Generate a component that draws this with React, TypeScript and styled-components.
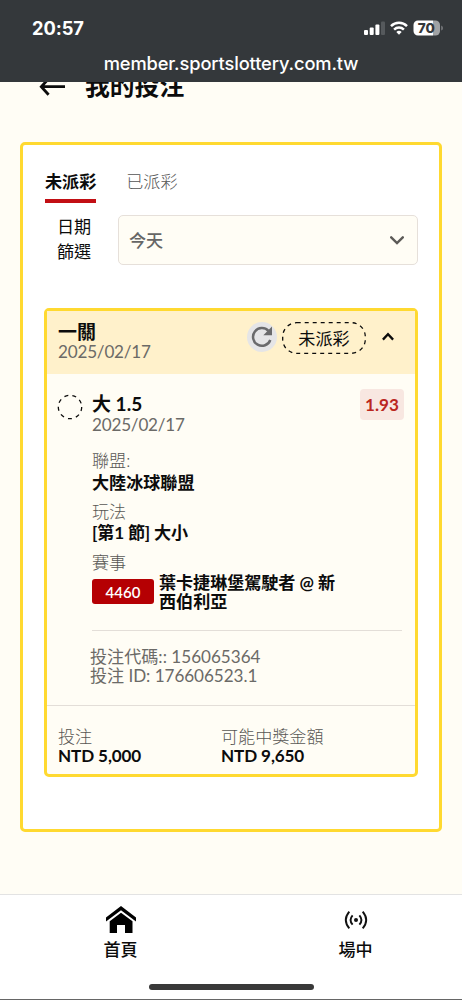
import React from "react";
import styled, { createGlobalStyle } from "styled-components";

const GlobalStyle = createGlobalStyle`
  *, *::before, *::after { box-sizing: border-box; }
  body { margin: 0; background: #fffdf5; }
`;

const Screen = styled.div`
  width: 462px;
  height: 1000px;
  display: flex;
  flex-direction: column;
  overflow: hidden;
  background: #fffdf5;
  color: #0c0c0c;
  font-family: Lato, "Noto Sans CJK TC", sans-serif;
`;

const BrowserBar = styled.header`
  flex: none;
  height: 82px;
  background: #34383b;
  color: #fff;
  font-family: Inter, sans-serif;
`;

const StatusRow = styled.div`
  height: 54px;
  padding: 1px 19px 0 32px;
  display: flex;
  align-items: center;
  justify-content: space-between;
`;

const Clock = styled.span`
  font-size: 18.3px;
  font-weight: 700;
  letter-spacing: -0.1px;
`;

const StatusIcons = styled.div`
  display: flex;
  align-items: center;
  gap: 5px;
  svg { display: block; }
`;

const Address = styled.div`
  height: 18px;
  line-height: 18px;
  text-align: center;
  font-size: 18.3px;
  font-weight: 500;
  letter-spacing: -0.13px;
  white-space: nowrap;
`;

const Main = styled.main`
  flex: 1;
  min-height: 0;
  padding: 0 20px;
  overflow: hidden;
`;

const TitleRow = styled.div`
  height: 30px;
  margin: -10px 0 40px;
  padding-left: 18px;
  display: flex;
  align-items: center;
  gap: 18px;
  svg { display: block; }
`;

const Title = styled.h1`
  margin: -2px 0 0;
  font-size: 24.8px;
  line-height: 30px;
  font-weight: 700;
`;

const Panel = styled.section`
  height: 690px;
  padding: 25px 21px 0 22px;
  border: 3px solid #ffd930;
  border-radius: 5px;
  background: #fff;
`;

const Tabs = styled.nav`
  display: flex;
  gap: 30px;
  height: 33px;
`;

const Tab = styled.div<{ $active?: boolean }>`
  height: 33px;
  line-height: 24px;
  font-size: 17.1px;
  font-weight: ${(p) => (p.$active ? 700 : 300)};
  color: ${(p) => (p.$active ? "#0c0c0c" : "#555")};
  border-bottom: ${(p) => (p.$active ? "4px solid #c20f14" : "none")};
`;

const Filter = styled.div`
  margin-top: 12px;
  padding-left: 12px;
  display: flex;
  justify-content: space-between;
`;

const FilterLabel = styled.div`
  width: 35px;
  margin-top: -1px;
  font-size: 17.1px;
  line-height: 25px;
  font-weight: 400;
`;

const Select = styled.div`
  width: 300px;
  height: 50px;
  padding: 0 13px 2px 10px;
  display: flex;
  align-items: center;
  justify-content: space-between;
  border: 1px solid #e6e0da;
  border-radius: 5px;
  background: #fffdf5;
  color: #666;
  font-size: 17.1px;
  font-weight: 500;
  svg { margin-top: 2px; }
`;

const Ticket = styled.article`
  height: 469px;
  margin: 43px 0 0 -1px;
  display: flex;
  flex-direction: column;
  border: 3px solid #ffd930;
  border-radius: 5px;
  background: #fffdf5;
`;

const TicketHead = styled.div`
  height: 63px;
  padding: 10px 21px 0 11px;
  display: flex;
  background: #fff1cb;
`;

const HeadText = styled.div`
  flex: 1;
`;

const HeadActions = styled.div`
  height: 33px;
  display: flex;
  align-items: center;
`;

const Refresh = styled.div`
  width: 30px;
  height: 30px;
  margin: -2px 5px 0 0;
  display: flex;
  align-items: center;
  justify-content: center;
  border-radius: 50%;
  background: #e5e5e7;
`;

const Pill = styled.div`
  position: relative;
  width: 84px;
  height: 32px;
  margin-right: 16px;
  line-height: 33px;
  text-align: center;
  font-size: 17.1px;
  svg { position: absolute; inset: 0; }
`;

const Chevron = styled.svg`
  margin-top: -2px;
`;

const Line = styled.div<{
  $size?: number;
  $weight?: number;
  $muted?: boolean;
  $height?: number;
  $gap?: number;
  $spacing?: number;
}>`
  height: ${(p) => p.$height ?? 20}px;
  line-height: ${(p) => p.$height ?? 20}px;
  margin-top: ${(p) => p.$gap ?? 0}px;
  font-size: ${(p) => p.$size ?? 17.1}px;
  font-weight: ${(p) => p.$weight ?? 400};
  letter-spacing: ${(p) => p.$spacing ?? 0}px;
  color: ${(p) => (p.$muted ? (p.$weight === 300 ? "#585754" : "#6b6a67") : "#0c0c0c")};
  white-space: nowrap;
`;

const Selection = styled.div`
  height: 332px;
  padding: 18px 11px 0 10px;
  display: flex;
  border-bottom: 1px solid #e3ded8;
`;

const Marker = styled.div`
  width: 35px;
  padding-top: 2px;
  svg { display: block; }
`;

const Details = styled.div`
  flex: 1;
  min-width: 0;
`;

const DetailsTop = styled.div`
  display: flex;
  justify-content: space-between;
  height: 59px;
`;

const Odds = styled.div`
  width: 44px;
  height: 31px;
  margin-top: -3px;
  line-height: 31px;
  text-align: center;
  border-radius: 4px;
  background: #f8e7e1;
  color: #bb271f;
  font-size: 17.1px;
  font-weight: 700;
`;

const Match = styled.div`
  display: flex;
  align-items: flex-start;
  gap: 5px;
  height: 58px;
  margin-right: 2px;
  border-bottom: 1px solid #e3ded8;
`;

const Code = styled.div`
  width: 62px;
  height: 25px;
  margin-top: 6px;
  line-height: 26px;
  text-align: center;
  border-radius: 3px;
  background: #b50003;
  color: #fff;
  font-size: 15px;
  font-weight: 600;
`;

const References = styled.div`
  margin: 16px 0 0 -2px;
`;

const Totals = styled.div`
  padding: 21px 0 0 11px;
  display: grid;
  grid-template-columns: 163px 1fr;
`;

const BottomNav = styled.footer`
  flex: none;
  height: 106px;
  border-top: 1px solid #e3e3e3;
  border-bottom: 1px solid #666;
  background: #fff;
  display: flex;
  flex-direction: column;
  align-items: center;
`;

const NavItems = styled.div`
  width: 462px;
  height: 89px;
  padding: 0 3px;
  display: grid;
  grid-template-columns: 235px 235px;
`;

const NavItem = styled.div`
  padding-top: 10px;
  display: flex;
  flex-direction: column;
  align-items: center;
  font-size: 17.1px;
  font-weight: 500;
  line-height: 24px;
  svg { display: block; margin-bottom: 3px; }
`;

const HomeIndicator = styled.div`
  width: 165px;
  height: 6px;
  border-radius: 3px;
  background: #393939;
`;

export default function App() {
  return (
    <Screen>
      <GlobalStyle />
      <BrowserBar>
        <StatusRow>
          <Clock>20:57</Clock>
          <StatusIcons>
            <svg width="21" height="14" viewBox="0 0 21 14" fill="#fff">
              <rect x="0" y="9" width="4" height="5" rx="1" />
              <rect x="5.7" y="6.6" width="4" height="7.4" rx="1" />
              <rect x="11.4" y="3.4" width="4" height="10.6" rx="1" />
              <rect x="17" y="0.5" width="4" height="13.5" rx="1" fill="#55595c" />
            </svg>
            <svg width="18" height="14" viewBox="0 0 18 14" fill="none" stroke="#fff" strokeWidth="2.5">
              <path d="M1 5.1A11.4 11.4 0 0 1 17 5.1" />
              <path d="M4.1 8.6A7 7 0 0 1 13.9 8.6" />
              <path d="M9 13.8L6.3 11.1A3.9 3.9 0 0 1 11.7 11.1Z" fill="#fff" stroke="none" />
            </svg>
            <svg width="30" height="16" viewBox="0 0 30 16">
              <path d="M5 0.5H20V15.5H5A4.5 4.5 0 0 1 0.5 11V5A4.5 4.5 0 0 1 5 0.5Z" fill="#fff" />
              <path d="M20 0.5H22.5A4.5 4.5 0 0 1 27 5V11A4.5 4.5 0 0 1 22.5 15.5H20Z" fill="#a0a2a4" />
              <path d="M28.2 5.5Q30 6 30 8T28.2 10.5Z" fill="#77797c" />
              <text x="13.3" y="12.9" textAnchor="middle" fontFamily="Inter, sans-serif" fontSize="13.5" fontWeight="800" fill="#34383b">70</text>
            </svg>
          </StatusIcons>
        </StatusRow>
        <Address>member.sportslottery.com.tw</Address>
      </BrowserBar>

      <Main>
        <TitleRow>
          <svg width="29" height="20" viewBox="0 0 29 20" fill="none" stroke="#0c0c0c" strokeWidth="2.8">
            <path d="M27 9.7H3.5M10.6 1.7L3.3 9.7L10.6 17.7" />
          </svg>
          <Title>我的投注</Title>
        </TitleRow>

        <Panel>
          <Tabs>
            <Tab $active>未派彩</Tab>
            <Tab>已派彩</Tab>
          </Tabs>
          <Filter>
            <FilterLabel>日期篩選</FilterLabel>
            <Select>
              今天
              <svg width="14" height="9" viewBox="0 0 14 9" fill="none" stroke="#5c5a57" strokeWidth="2.4" strokeLinecap="round">
                <path d="M1.2 1.3L7 7L12.8 1.3" />
              </svg>
            </Select>
          </Filter>

          <Ticket>
            <TicketHead>
              <HeadText>
                <Line $size={19} $weight={700} $height={21}>一關</Line>
                <Line $muted $spacing={-0.2}>2025/02/17</Line>
              </HeadText>
              <HeadActions>
                <Refresh>
                  <svg width="22" height="22" viewBox="0 0 22 22" fill="none">
                    <path d="M17.4 4.8A8.9 8.9 0 1 0 19.3 14" stroke="#6a6a6c" strokeWidth="2.5" />
                    <path d="M21 0.5V9.2H12.3Z" fill="#6a6a6c" />
                  </svg>
                </Refresh>
                <Pill>
                  <svg width="84" height="32" viewBox="0 0 84 32" fill="none">
                    <rect x="0.7" y="0.7" width="82.6" height="30.6" rx="14" stroke="#0c0c0c" strokeWidth="1.3" strokeDasharray="4 4" />
                  </svg>
                  未派彩
                </Pill>
                <Chevron width="12" height="9" viewBox="0 0 12 9" fill="none" stroke="#0c0c0c" strokeWidth="2.3">
                  <path d="M0.9 7.6L6 2.2L11.1 7.6" />
                </Chevron>
              </HeadActions>
            </TicketHead>

            <Selection>
              <Marker>
                <svg width="26" height="26" viewBox="0 0 26 26" fill="none">
                  <circle cx="13" cy="13" r="11.7" stroke="#0c0c0c" strokeWidth="1.3" strokeDasharray="4 4.17" />
                </svg>
              </Marker>
              <Details>
                <DetailsTop>
                  <div>
                    <Line $size={19} $weight={700} $height={24}>大 1.5</Line>
                    <Line $muted $height={18} $spacing={-0.2}>2025/02/17</Line>
                  </div>
                  <Odds>1.93</Odds>
                </DetailsTop>
                <Line $muted $weight={300}>聯盟:</Line>
                <Line $weight={700} $gap={2}>大陸冰球聯盟</Line>
                <Line $muted $weight={300} $gap={9}>玩法</Line>
                <Line $weight={700} $gap={1} $spacing={-0.15}>[第1 節] 大小</Line>
                <Line $muted $weight={300} $gap={10}>賽事</Line>
                <Match>
                  <Code>4460</Code>
                  <div>
                    <Line $weight={700} $height={19} $spacing={-0.05}>葉卡捷琳堡駕駛者 @ 新</Line>
                    <Line $weight={700} $height={19}>西伯利亞</Line>
                  </div>
                </Match>
                <References>
                  <Line $muted $height={19}>投注代碼:: 156065364</Line>
                  <Line $muted $height={19} $spacing={-0.05}>投注 ID: 176606523.1</Line>
                </References>
              </Details>
            </Selection>

            <Totals>
              <div>
                <Line $muted $weight={300}>投注</Line>
                <Line $weight={700} $height={18} $spacing={-0.12}>NTD 5,000</Line>
              </div>
              <div>
                <Line $muted $weight={300}>可能中獎金額</Line>
                <Line $weight={700} $height={18} $spacing={-0.12}>NTD 9,650</Line>
              </div>
            </Totals>
          </Ticket>
        </Panel>
      </Main>

      <BottomNav>
        <NavItems>
          <NavItem>
            <svg width="30" height="30" viewBox="0 0 30 30" fill="#000">
              <path d="M15 1L30 12.5V16.5L15 5.2L0 16.5V12.5Z" />
              <path d="M15 7.7L26.5 16.3V28H19V20H11V28H3.7V16.3Z" />
            </svg>
            首頁
          </NavItem>
          <NavItem>
            <svg width="24" height="30" viewBox="0 0 24 30" fill="none" stroke="#111" strokeWidth="1.9">
              <circle cx="12" cy="15" r="2" fill="#111" stroke="none" />
              <path d="M8.6 10.3Q4.5 15 8.6 19.7M15.4 10.3Q19.5 15 15.4 19.7" />
              <path d="M5.3 6.6Q-1.7 15 5.3 23.4M18.7 6.6Q25.7 15 18.7 23.4" />
            </svg>
            場中
          </NavItem>
        </NavItems>
        <HomeIndicator />
      </BottomNav>
    </Screen>
  );
}
